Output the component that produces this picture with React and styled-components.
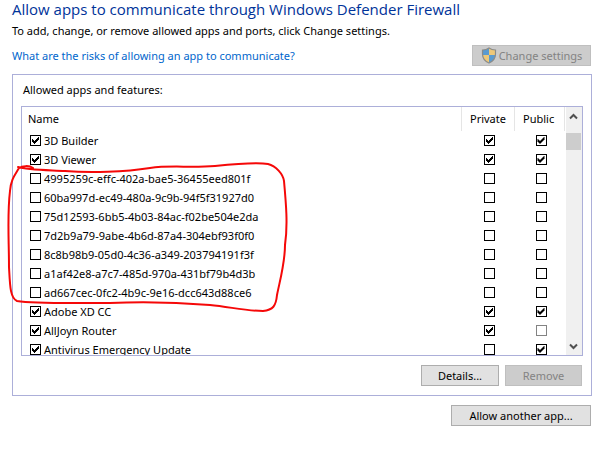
import React, { useState } from 'react';
import styled, { createGlobalStyle } from 'styled-components';

const initialApps = [
    { name: '3D Builder', enabled: true, private: true, public: true },
    { name: '3D Viewer', enabled: true, private: true, public: true },
    { name: '4995259c-effc-402a-bae5-36455eed801f' },
    { name: '60ba997d-ec49-480a-9c9b-94f5f31927d0' },
    { name: '75d12593-6bb5-4b03-84ac-f02be504e2da' },
    { name: '7d2b9a79-9abe-4b6d-87a4-304ebf93f0f0' },
    { name: '8c8b98b9-05d0-4c36-a349-203794191f3f' },
    { name: 'a1af42e8-a7c7-485d-970a-431bf79b4d3b' },
    { name: 'ad667cec-0fc2-4b9c-9e16-dcc643d88ce6' },
    { name: 'Adobe XD CC', enabled: true, private: true, public: true },
    { name: 'AllJoyn Router', enabled: true, private: true, publicLocked: true },
    { name: 'Antivirus Emergency Update', enabled: true, public: true },
];

const ShieldIcon = () => (
    <Shield viewBox="0 0 16 17" aria-hidden="true">
        <path d="M8 1C6 2.500 3.500 3 1.500 3V8H8Z" fill="#5b9bd0" />
        <path d="M8 1C10 2.500 12.500 3 14.500 3V8H8Z" fill="#eec878" />
        <path d="M1.500 8C2 12 4.500 14.500 8 16V8Z" fill="#eec878" />
        <path d="M14.500 8C14 12 11.500 14.500 8 16V8Z" fill="#5b9bd0" />
        <path
            d="M8 1C6 2.500 3.500 3 1.500 3V7C1.500 11.500 4.500 14.500 8 16C11.500 14.500 14.500 11.500 14.500 7V3C12.500 3 10 2.500 8 1Z"
            fill="none"
            stroke="#8b8b88"
            strokeWidth="1.200"
        />
    </Shield>
);

const Chevron = ({ down }) => (
    <svg width="9" height="7" viewBox="0 0 9 7" aria-hidden="true">
        <path
            d={down ? 'M1 1.500L4.500 5L8 1.500' : 'M1 5.500L4.500 2L8 5.500'}
            fill="none"
            stroke="#505050"
            strokeWidth="2"
        />
    </svg>
);

const App = () => {
    const [apps, setApps] = useState(initialApps);

    const toggle = (index, key) => {
        setApps(apps.map((app, i) => (i === index ? { ...app, [key]: !app[key] } : app)));
    };

    return (
    <Page>
        <GlobalStyle />
        <Title>Allow apps to communicate through Windows Defender Firewall</Title>
        <Intro>To add, change, or remove allowed apps and ports, click Change settings.</Intro>

        <LinkRow>
            <HelpLink href="#risks">What are the risks of allowing an app to communicate?</HelpLink>
            <Button $width={119} disabled>
                <ShieldIcon />
                Change settings
            </Button>
        </LinkRow>

        <Panel>
            <PanelLabel id="apps-label">Allowed apps and features:</PanelLabel>

            <ListFrame>
                <List>
                    <Table aria-labelledby="apps-label">
                        <colgroup>
                            <col />
                            <Column $width={53} />
                            <Column $width={50} />
                        </colgroup>
                        <thead>
                            <tr>
                                <HeadCell>Name</HeadCell>
                                <HeadCell>Private</HeadCell>
                                <HeadCell>Public</HeadCell>
                            </tr>
                        </thead>
                        <tbody>
                            {apps.map((app, i) => (
                                <tr key={app.name}>
                                    <Cell>
                                        <AppLabel>
                                            <Checkbox
                                                checked={!!app.enabled}
                                                onChange={() => toggle(i, 'enabled')}
                                            />
                                            {app.name}
                                        </AppLabel>
                                    </Cell>
                                    <Cell $center>
                                        <Checkbox
                                            aria-label={`${app.name}, private`}
                                            checked={!!app.private}
                                            onChange={() => toggle(i, 'private')}
                                        />
                                    </Cell>
                                    <Cell $center>
                                        <Checkbox
                                            aria-label={`${app.name}, public`}
                                            checked={!!app.public}
                                            disabled={!!app.publicLocked}
                                            onChange={() => toggle(i, 'public')}
                                        />
                                    </Cell>
                                </tr>
                            ))}
                        </tbody>
                    </Table>
                </List>
                <ScrollBar>
                    <ScrollArrow aria-label="Scroll up"><Chevron /></ScrollArrow>
                    <ScrollThumb />
                    <ScrollArrow aria-label="Scroll down"><Chevron down /></ScrollArrow>
                </ScrollBar>
                <Marker viewBox="0 0 290 160" aria-hidden="true">
                    <path d="M28 13C24 10 17 11 14 13C10 20 6 24 5 36C2 60 4 85 4 112C5 130 5 143 12 146C30 149 65 148 105 148C150 146 180 148 205 150C225 152 242 156 258 156C268 155 271 151 272 140C275 125 280 108 280 90C283 70 281 48 279 26C278 19 271 11 263 9C250 7 230 9 210 11C185 13 165 10 145 13C120 17 85 18 60 16C40 15 22 15 13 12" />
                </Marker>
            </ListFrame>

            <Actions>
                <Button $width={78}>Details...</Button>
                <Button $width={77} disabled>Remove</Button>
            </Actions>
        </Panel>

        <Footer>
            <Button $width={140}>Allow another app...</Button>
        </Footer>
    </Page>
    );
};

export default App;

const GlobalStyle = createGlobalStyle`
    body {
        margin: 0;
        background: white;
        color: black;
        font-family: 'Noto Sans', 'Open Sans', sans-serif;
        font-size: 11px;
        line-height: 16px;
    }
`;

const Page = styled.main`
    padding: 0 18px 16px 12px;
`;

const Title = styled.h1`
    margin: 0;
    color: #003399;
    font-family: 'Open Sans', 'Noto Sans', sans-serif;
    font-size: 15px;
    font-weight: 400;
    line-height: 18px;
`;

const Intro = styled.p`
    margin: 5px 0 6px;
`;

const LinkRow = styled.div`
    display: flex;
    align-items: center;
    justify-content: space-between;
    padding-right: 1px;
`;

const HelpLink = styled.a`
    color: #0066cc;
    text-decoration: none;
    &:hover {
        text-decoration: underline;
    }
`;

const Button = styled.button`
    display: inline-flex;
    align-items: center;
    justify-content: center;
    gap: 2px;
    box-sizing: border-box;
    width: ${({ $width }) => $width}px;
    height: 21px;
    padding: 0;
    border: 1px solid #adadad;
    background: #e1e1e1;
    color: black;
    font: inherit;
    white-space: nowrap;
    &:disabled {
        border-color: #bfbfbf;
        background: #cccccc;
        color: #838383;
    }
`;

const Shield = styled.svg`
    width: 16px;
    height: 17px;
    flex: none;
`;

const Panel = styled.section`
    margin-top: 8px;
    padding: 7px 8px 9px;
    border: 1px solid #acafd9;
`;

const PanelLabel = styled.div`
    padding: 0 2px 8px;
`;

const ListFrame = styled.div`
    position: relative;
    display: flex;
    border: 1px solid #acafd9;
`;

const List = styled.div`
    flex: 1;
    height: 248px;
    overflow: hidden;
`;

const Table = styled.table`
    width: 100%;
    border-spacing: 0;
    table-layout: fixed;
`;

const Column = styled.col`
    width: ${({ $width }) => $width}px;
`;

const HeadCell = styled.th`
    box-sizing: border-box;
    height: 24px;
    padding: 0 0 0 8px;
    border-right: 1px solid #e5e5e5;
    font-weight: 400;
    text-align: left;
    &:first-child {
        padding-left: 6px;
    }
`;

const Cell = styled.td`
    height: 19px;
    padding: ${({ $center }) => ($center ? '0 0 0 2px' : '0 8px')};
    text-align: ${({ $center }) => ($center ? 'center' : 'left')};
    line-height: 0;
`;

const AppLabel = styled.label`
    display: flex;
    align-items: center;
    gap: 3px;
    line-height: 16px;
`;

const Checkbox = styled.input.attrs({ type: 'checkbox' })`
    appearance: none;
    box-sizing: border-box;
    flex: none;
    width: 11px;
    height: 11px;
    margin: 0;
    border: 1px solid black;
    background: white;
    vertical-align: middle;
    &:checked::before {
        content: '';
        display: block;
        width: 9px;
        height: 9px;
        background: black;
        clip-path: polygon(
            1px 3px, 2px 3px, 2px 4px, 3px 4px, 3px 5px, 4px 5px, 4px 4px,
            5px 4px, 5px 3px, 6px 3px, 6px 2px, 7px 2px, 7px 1px, 8px 1px,
            8px 4px, 7px 4px, 7px 5px, 6px 5px, 6px 6px, 5px 6px, 5px 7px,
            4px 7px, 4px 8px, 3px 8px, 3px 7px, 2px 7px, 2px 6px, 1px 6px
        );
    }
    &:disabled {
        border-color: #838383;
    }
`;

const ScrollBar = styled.div`
    display: flex;
    flex-direction: column;
    width: 16px;
    margin-left: 1px;
    background: #f0f0f0;
`;

const ScrollArrow = styled.button`
    display: flex;
    align-items: center;
    justify-content: center;
    width: 15px;
    height: 18px;
    padding: 0;
    border: 0;
    background: transparent;
    &:first-child {
        margin-bottom: 8px;
    }
    &:last-child {
        margin-top: auto;
    }
`;

const ScrollThumb = styled.div`
    width: 15px;
    height: 17px;
    background: #cdcdcd;
`;

/* hand-drawn loop around the unnamed entries, it runs past the list's left edge */
const Marker = styled.svg`
    position: absolute;
    top: 48px;
    left: -17px;
    width: 290px;
    height: 160px;
    pointer-events: none;
    path {
        fill: none;
        stroke: #f50808;
        stroke-width: 2;
        stroke-linecap: round;
        stroke-linejoin: round;
    }
`;

const Actions = styled.div`
    display: flex;
    justify-content: flex-end;
    gap: 6px;
    padding: 9px 1px 0 0;
`;

const Footer = styled.div`
    display: flex;
    justify-content: flex-end;
    padding: 9px 1px 0 0;
`;
